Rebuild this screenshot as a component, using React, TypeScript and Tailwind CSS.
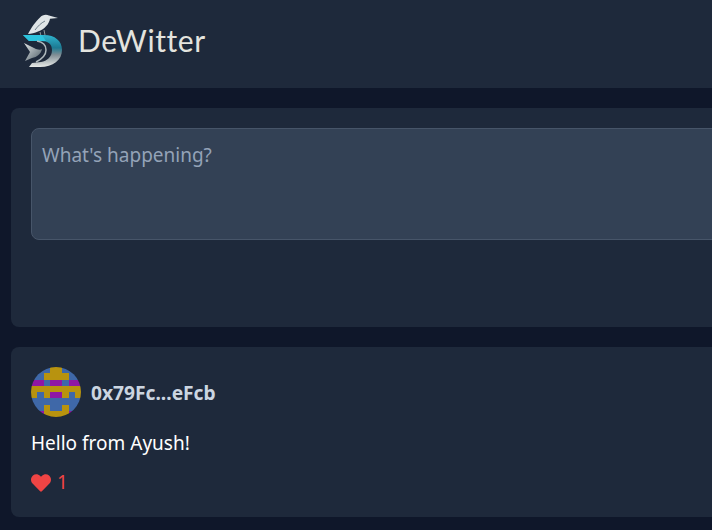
import { FaHeart } from 'react-icons/fa'

const GOLD = 'bg-[#b8930f]'
const BLUE = 'bg-[#3f68a8]'
const PURPLE = 'bg-[#8f17a5]'

// 8x8 identicon, g = gold, b = blue, p = purple
const AVATAR = [
    'bbbggbbb',
    'bbggggbb',
    'ppbppbpp',
    'gggggggg',
    'gbgppgbg',
    'bbbbbbbb',
    'bbgbbgbb',
    'bpggggpb',
]

const Avatar = () => (
    <div className="size-[50px] rounded-full overflow-hidden grid grid-cols-8 grid-rows-8 shrink-0">
        {AVATAR.join('').split('').map((c, i) => (
            <div key={i} className={c === 'g' ? GOLD : c === 'p' ? PURPLE : BLUE} />
        ))}
    </div>
)

const Logo = () => (
    <svg width="44" height="56" viewBox="0 0 44 56" className="shrink-0">
        <defs>
            <linearGradient id="dBody" x1="0" y1="0" x2="0" y2="1">
                <stop offset="0" stopColor="#2fb4cf" />
                <stop offset="0.4" stopColor="#1c7a92" />
                <stop offset="0.62" stopColor="#7f8d94" />
                <stop offset="1" stopColor="#e8eae8" />
            </linearGradient>
            <linearGradient id="dInner" x1="0" y1="0" x2="1" y2="1">
                <stop offset="0" stopColor="#e2e6e6" />
                <stop offset="1" stopColor="#4d5c66" />
            </linearGradient>
        </defs>
        {/* bird */}
        <path d="M8 22 C11 16 16 9 20 5.5 C22 3 26 2 29 3.5 L38 6 L30 6.8 C29 12 25 17 18 19.5 C15 21 11 22 8 22 Z" fill="#dfe4e6" />
        <path d="M15 18 C18 14 21 11 25 9" stroke="#6f7f8a" strokeWidth="1" fill="none" />
        <path d="M20 20 L21 24 M24 18 L25 23" stroke="#8d979c" strokeWidth="1" />
        {/* D */}
        <path d="M3 23 L24 23 C35 23 42 29 42 38 C42 48 33 55 20 55 L9 55 L12 51 L21 50 C27 49 32 45 32 38 C32 32 28 29 21 29 L9 29 Z" fill="url(#dBody)" />
        <path d="M3 23 L22 23 L26 29 L9 29 Z" fill="#2cc3dd" />
        {/* inner curve */}
        <path d="M17 29 C24 30 26 34 26 38 C26 43 22 47 16 50" stroke="#aeb8bc" strokeWidth="1.5" fill="none" />
        {/* arrow */}
        <path d="M4 31 L16 37 C19 38 21 38 22 37 C21 42 17 45 12 46 L5 49 L10 40 Z" fill="url(#dInner)" />
    </svg>
)

const App = () => {
    return (
        <div className="w-[712px] h-[530px] overflow-hidden bg-[#0f172a] font-['Noto_Sans',sans-serif]">
            <header className="h-[88px] bg-[#1e293b] flex items-center pl-5 pb-2 gap-[14px]">
                <Logo />
                <span className="text-[30px] leading-none tracking-[0.6px] text-[#e4e4df] font-['Lato',sans-serif]">DeWitter</span>
            </header>
            <main className="flex flex-col gap-5 pt-5 pl-[11px]">
                <div className="w-[760px] h-[219px] p-5 bg-[#1e293b] rounded-lg">
                    <textarea
                        readOnly
                        placeholder="What's happening?"
                        className="w-full h-[112px] resize-none rounded-lg border border-[#475569] bg-[#334155] px-[10px] py-[13px] text-[19px] leading-[27px] text-white placeholder:text-[#94a3b8] outline-none"
                    />
                </div>
                <div className="w-[760px] h-[170px] p-5 bg-[#1e293b] rounded-lg">
                    <div className="flex items-center gap-[10px]">
                        <Avatar />
                        <span className="mt-[2px] text-[19.2px] font-bold text-[#cbd5e1]">0x79Fc...eFcb</span>
                    </div>
                    <p className="mt-[13px] text-[19px] leading-[27px] text-white">Hello from Ayush!</p>
                    <div className="mt-3 flex items-center gap-[6px] text-[#ef4444]">
                        <FaHeart className="size-5" />
                        <span className="text-[19px] leading-[27px]">1</span>
                    </div>
                </div>
            </main>
        </div>
    )
}

export default App
